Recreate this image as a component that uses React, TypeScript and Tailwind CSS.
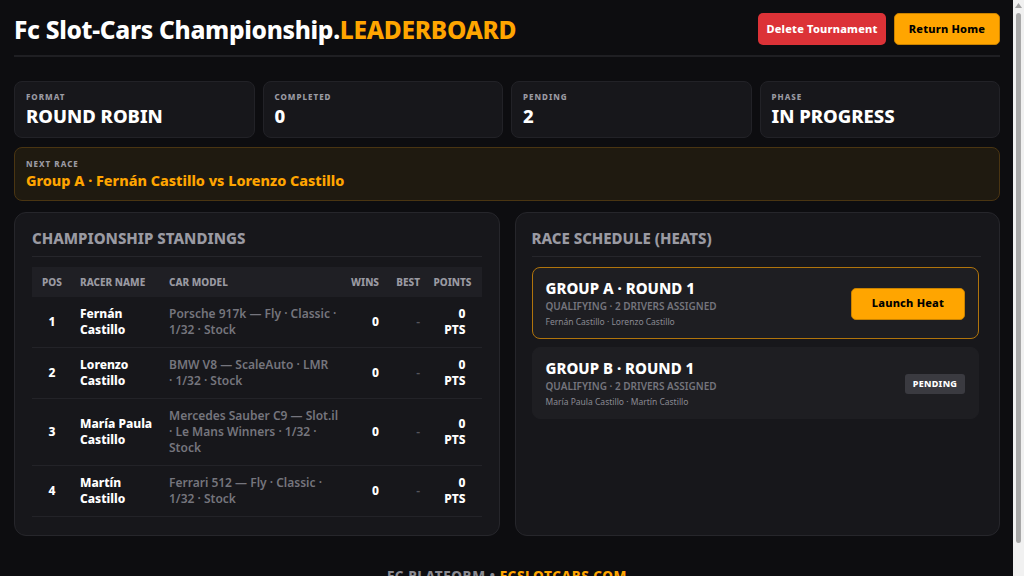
import React from "react";

const standings = [
  { pos: 1, name: "Fernán Castillo", car: ["Porsche 917k — Fly · Classic ·", "1/32 · Stock"] },
  { pos: 2, name: "Lorenzo Castillo", car: ["BMW V8 — ScaleAuto · LMR", "· 1/32 · Stock"] },
  { pos: 3, name: "María Paula Castillo", car: ["Mercedes Sauber C9 — Slot.il", "· Le Mans Winners · 1/32 ·", "Stock"] },
  { pos: 4, name: "Martín Castillo", car: ["Ferrari 512 — Fly · Classic ·", "1/32 · Stock"] },
];

function Stat({ label, value }: { label: string; value: string }) {
  return (
    <div className="rounded-[8px] border border-[#222227] bg-[#17171b] px-[11px] pt-[9px] pb-[10px]">
      <div className="text-[8px] font-extrabold tracking-[1px] text-[#9b9ba3] leading-[12px]">{label}</div>
      <div className="mt-[1px] text-[18.5px] font-extrabold text-white leading-[23px]">{value}</div>
    </div>
  );
}

function HeatCard({
  title,
  drivers,
  active,
}: {
  title: string;
  drivers: string;
  active: boolean;
}) {
  return (
    <div
      className={
        active
          ? "flex items-center justify-between rounded-[8px] border border-[#b0740c] bg-[#1e1e22] px-[13px] pt-[10px] pb-[9px]"
          : "flex items-center justify-between rounded-[8px] border border-[#1e1e22] bg-[#1e1e22] px-[13px] pt-[10px] pb-[9px]"
      }
    >
      <div>
        <div className="text-[15px] font-extrabold leading-[20px]">{title}</div>
        <div className="text-[10px] font-semibold leading-[16px] text-[#75757d]">QUALIFYING · 2 DRIVERS ASSIGNED</div>
        <div className="mt-[1px] text-[8.5px] leading-[14px] text-[#8a8a92]">{drivers}</div>
      </div>
      {active ? (
        <button className="h-[32px] w-[114px] rounded-[5px] border border-[#c98200] bg-[#ffa500] text-[11px] font-extrabold tracking-[0.2px] text-black">
          Launch Heat
        </button>
      ) : (
        <span className="flex h-[20px] w-[60px] items-center justify-center rounded-[3px] bg-[#3a3a40] text-[9px] font-extrabold tracking-[0.3px] text-white">
          PENDING
        </span>
      )}
    </div>
  );
}

export default function App() {
  return (
    <div
      className="flex h-screen bg-[#0d0d10] text-white"
      style={{ fontFamily: '"Noto Sans", "Open Sans", sans-serif' }}
    >
      <div className="min-w-0 flex-1 overflow-hidden pl-[14px] pr-[13px] pt-[13px]">
        <header className="flex items-start justify-between border-b-2 border-[#1f1f23] pb-[10px]">
          <h1 className="mt-[2px] text-[24.5px] font-extrabold leading-[30px] tracking-[-0.3px]">
            Fc Slot-Cars Championship.<span className="text-[#ffa500]">LEADERBOARD</span>
          </h1>
          <div className="flex gap-[8px]">
            <button className="h-[32px] w-[128px] rounded-[5px] bg-[#dc3237] text-[11px] font-extrabold tracking-[0.2px] text-white">
              Delete Tournament
            </button>
            <button className="h-[32px] w-[106px] rounded-[5px] border border-[#c98200] bg-[#ffa500] text-[11px] font-extrabold tracking-[0.2px] text-black">
              Return Home
            </button>
          </div>
        </header>

        <div className="mt-[24px] grid grid-cols-4 gap-[8px]">
          <Stat label="FORMAT" value="ROUND ROBIN" />
          <Stat label="COMPLETED" value="0" />
          <Stat label="PENDING" value="2" />
          <Stat label="PHASE" value="IN PROGRESS" />
        </div>

        <div className="mt-[9px] rounded-[8px] border border-[#4a3512] bg-[#1f1a10] px-[11px] pt-[10px] pb-[10px]">
          <div className="text-[8px] font-extrabold tracking-[1px] text-[#9b9ba3] leading-[12px]">NEXT RACE</div>
          <div className="mt-[1px] text-[14.4px] font-extrabold text-[#ffa500] leading-[19px]">
            Group A · Fernán Castillo vs Lorenzo Castillo
          </div>
        </div>

        <div className="mt-[11px] grid grid-cols-2 gap-[15px]">
          <section className="rounded-[12px] border border-[#26262b] bg-[#17171b] px-[17px] pt-[15px] pb-[18px]">
            <h2 className="border-b border-[#26262b] pb-[8px] text-[15px] font-extrabold leading-[20px] text-[#9a9aa2]">
              CHAMPIONSHIP STANDINGS
            </h2>
            <table className="mt-[10px] w-full table-fixed border-collapse">
              <colgroup>
                <col className="w-[40px]" />
                <col className="w-[89px]" />
                <col className="w-[182px]" />
                <col className="w-[46px]" />
                <col className="w-[41px]" />
                <col />
              </colgroup>
              <thead>
                <tr className="bg-[#1f1f24] text-[10px] font-extrabold text-[#9a9aa2]">
                  <th className="h-[30px] text-center font-extrabold">POS</th>
                  <th className="pl-[8px] text-left font-extrabold">RACER NAME</th>
                  <th className="pl-[8px] text-left font-extrabold">CAR MODEL</th>
                  <th className="pr-[10px] text-right font-extrabold">WINS</th>
                  <th className="pr-[10px] text-right font-extrabold">BEST</th>
                  <th className="pr-[10px] text-right font-extrabold">POINTS</th>
                </tr>
              </thead>
              <tbody>
                {standings.map((r) => (
                  <tr key={r.pos} className="border-b border-[#232328] text-[12px] leading-[16px]">
                    <td className="py-[9px] text-center font-extrabold">{r.pos}</td>
                    <td className="py-[9px] pl-[8px] pr-[4px] font-extrabold">{r.name}</td>
                    <td className="whitespace-nowrap py-[9px] pl-[8px] font-semibold text-[#75757d]">
                      {r.car.map((line, i) => (
                        <div key={i}>{line}</div>
                      ))}
                    </td>
                    <td className="py-[9px] pr-[10px] text-right font-extrabold">0</td>
                    <td className="py-[9px] pr-[10px] text-right font-semibold text-[#55555c]">-</td>
                    <td className="py-[9px] pr-[16px] text-right font-extrabold">
                      0<br />PTS
                    </td>
                  </tr>
                ))}
              </tbody>
            </table>
          </section>

          <section className="rounded-[12px] border border-[#26262b] bg-[#17171b] pl-[16px] pr-[18px] pt-[15px] pb-[18px]">
            <h2 className="border-b border-[#26262b] pb-[8px] text-[15px] font-extrabold leading-[20px] text-[#9a9aa2]">
              RACE SCHEDULE (HEATS)
            </h2>
            <div className="mt-[10px] mr-[2px] flex flex-col gap-[8px]">
              <HeatCard title="GROUP A · ROUND 1" drivers="Fernán Castillo · Lorenzo Castillo" active />
              <HeatCard title="GROUP B · ROUND 1" drivers="María Paula Castillo · Martín Castillo" active={false} />
            </div>
          </section>
        </div>

        <footer className="pt-[30px] pb-[30px] text-center text-[13.5px] font-extrabold tracking-[0.6px] text-[#8a8a92]">
          FC PLATFORM • <span className="text-[#ffa500]">FCSLOTCARS.COM</span>
        </footer>
      </div>

      <div className="flex w-[11px] shrink-0 flex-col items-center bg-[#f1f1f1] pt-[3px]">
        <svg width="7" height="5" viewBox="0 0 7 5" className="shrink-0">
          <path d="M3.5 0 L7 5 L0 5 Z" fill="#a3a3a3" />
        </svg>
        <div className="mt-[5px] h-[530px] w-[5px] rounded-[3px] bg-[#a8a8a8]" />
      </div>
    </div>
  );
}
